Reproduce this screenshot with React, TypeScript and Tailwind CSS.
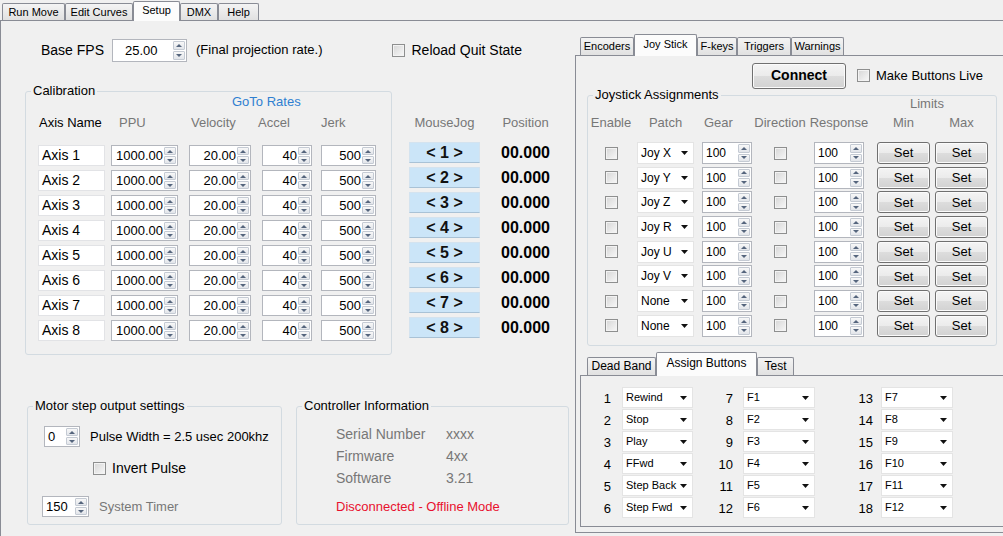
import React from 'react';

const GRAY = 'text-[#777777]';

function Tri({ up }: { up?: boolean }) {
  return (
    <svg width="6" height="3" viewBox="0 0 6 3" className="block">
      <path d={up ? 'M0 3L3 0L6 3Z' : 'M0 0L3 3L6 0Z'} fill="#55657d" />
    </svg>
  );
}

function SpinArrows() {
  return (
    <div className="flex w-[13px] shrink-0 flex-col gap-px py-px pr-px">
      <div className="flex flex-1 items-center justify-center rounded-[1px] border border-[#c4cad3] bg-gradient-to-b from-[#f8f8f8] to-[#e2e5ea]">
        <Tri up />
      </div>
      <div className="flex flex-1 items-center justify-center rounded-[1px] border border-[#c4cad3] bg-gradient-to-b from-[#f8f8f8] to-[#e2e5ea]">
        <Tri />
      </div>
    </div>
  );
}

function Spin({
  value,
  className = '',
  left,
  text = 'text-[13px]',
}: {
  value: string;
  className?: string;
  left?: boolean;
  text?: string;
}) {
  return (
    <div className={`flex shrink-0 border border-[#b3b6bd] bg-white ${className}`}>
      <div
        className={`flex flex-1 items-center leading-none ${text} ${
          left ? 'justify-start pl-[3px]' : 'justify-end pr-px'
        }`}
      >
        {value}
      </div>
      <SpinArrows />
    </div>
  );
}

function Check() {
  return (
    <span className="inline-block h-[13px] w-[13px] shrink-0 border border-[#8e8f8f] bg-gradient-to-br from-[#d6d6d6] to-[#f8f8f8] shadow-[inset_0_0_0_1px_#f3f3f3]" />
  );
}

function Combo({
  value,
  className = '',
  top,
}: {
  value: string;
  className?: string;
  top?: boolean;
}) {
  return (
    <div
      className={`flex shrink-0 justify-between border border-[#e4e4e4] bg-white pl-[3px] pr-[5px] ${
        top ? 'h-[21px] items-start pt-[2px] text-[11px]' : 'h-[22px] items-center text-[12px]'
      } ${className}`}
    >
      <span className="leading-[14px] whitespace-nowrap">{value}</span>
      <svg width="7" height="4" viewBox="0 0 7 4" className={top ? 'mt-[6px] block' : 'block'}>
        <path d="M0 0H7L3.5 4Z" fill="#111" />
      </svg>
    </div>
  );
}

function WinButton({
  label,
  className = '',
}: {
  label: string;
  className?: string;
}) {
  return (
    <div
      className={`flex shrink-0 items-center justify-center rounded-[3px] border border-[#707070] bg-[linear-gradient(#f4f4f4,#ebebeb_50%,#dddddd_50%,#d2d2d2)] shadow-[inset_0_0_0_1px_#fbfbfb] ${className}`}
    >
      {label}
    </div>
  );
}

function Tab({
  label,
  className,
  active,
}: {
  label: string;
  className: string;
  active?: boolean;
}) {
  return (
    <div
      className={`flex shrink-0 items-center justify-center rounded-t-[2px] border border-b-0 border-[#898c95] whitespace-nowrap ${
        active
          ? 'relative z-10 -mb-px bg-[#fcfcfc] pb-[3px]'
          : 'bg-gradient-to-b from-[#f4f4f4] to-[#e1e1e1]'
      } ${className}`}
    >
      {label}
    </div>
  );
}

function Group({
  title,
  className = '',
  children,
}: {
  title: string;
  className?: string;
  children: React.ReactNode;
}) {
  return (
    <fieldset className={`shrink-0 rounded-[3px] border border-[#d3dbe1] ${className}`}>
      <legend className="ml-[5px] px-[2px] text-[13px] leading-[10px]">{title}</legend>
      {children}
    </fieldset>
  );
}

const AXES = [1, 2, 3, 4, 5, 6, 7, 8];
const PATCHES = ['Joy X', 'Joy Y', 'Joy Z', 'Joy R', 'Joy U', 'Joy V', 'None', 'None'];
const ASSIGN = [
  ['Rewind', 'F1', 'F7'],
  ['Stop', 'F2', 'F8'],
  ['Play', 'F3', 'F9'],
  ['FFwd', 'F4', 'F10'],
  ['Step Back', 'F5', 'F11'],
  ['Step Fwd', 'F6', 'F12'],
];

function Calibration() {
  return (
    <Group title="Calibration" className="ml-[24px] w-[367px]">
      <div className="-mt-px h-[14px] pl-[206px] text-[13px] leading-[14px] text-[#2f7fd1]">
        GoTo Rates
      </div>
      <div className="mt-[7px] flex h-[14px] pl-[12px] text-[13px] leading-[14px]">
        <span className="w-[67px] pl-px">Axis Name</span>
        <span className={`ml-[6px] w-[67px] pl-[8px] ${GRAY}`}>PPU</span>
        <span className={`ml-[11px] w-[62px] pl-[2px] ${GRAY}`}>Velocity</span>
        <span className={`ml-[7px] w-[54px] ${GRAY}`}>Accel</span>
        <span className={`ml-[9px] w-[55px] ${GRAY}`}>Jerk</span>
      </div>
      <div className="mt-[15px] flex flex-col gap-[4px] pb-[13px]">
        {AXES.map((n) => (
          <div key={n} className="flex h-[21px] pl-[12px]">
            <div className="flex w-[67px] items-center border border-[#e2e3e6] bg-white pl-[3px] text-[14px]">
              Axis {n}
            </div>
            <Spin value="1000.00" className="ml-[6px] w-[67px]" />
            <Spin value="20.00" className="ml-[11px] w-[62px]" />
            <Spin value="40" className="ml-[11px] w-[50px]" />
            <Spin value="500" className="ml-[9px] w-[55px]" />
          </div>
        ))}
      </div>
    </Group>
  );
}

function JogColumn() {
  return (
    <div className="ml-[17px] pt-[30px]">
      <div className={`flex h-[14px] text-[13px] leading-[14px] ${GRAY}`}>
        <span className="w-[71px] text-center">MouseJog</span>
        <span className="ml-[21px] w-[49px] text-center whitespace-nowrap">Position</span>
      </div>
      <div className="mt-[12px] flex flex-col gap-[4px]">
        {AXES.map((n) => (
          <div key={n} className="flex h-[21px] items-center">
            <div className="flex h-[21px] w-[71px] items-center justify-center border border-[#d4e3ef] border-b-[#a9c2d6] bg-[#cbe5f8] text-[16px] font-bold text-[#111]">
              &lt; {n} &gt;
            </div>
            <div className="ml-[21px] w-[49px] text-center text-[16px] font-bold whitespace-nowrap">
              00.000
            </div>
          </div>
        ))}
      </div>
    </div>
  );
}

function BottomLeft() {
  return (
    <div className="mt-[46px] flex items-stretch">
      <Group title="Motor step output settings" className="ml-[26px] w-[255px]">
        <div className="mt-[15px] flex h-[21px] items-center pl-[16px]">
          <Spin value="0" left className="h-[21px] w-[36px]" />
          <span className="ml-[10px] text-[13px] whitespace-nowrap">Pulse Width = 2.5 usec 200khz</span>
        </div>
        <div className="mt-[13px] flex h-[16px] items-center pl-[65px]">
          <Check />
          <span className="ml-[6px] text-[14px]">Invert Pulse</span>
        </div>
        <div className="mt-[20px] flex h-[21px] items-center pl-[14px]">
          <Spin value="150" left className="h-[21px] w-[47px]" />
          <span className={`ml-[10px] text-[13px] ${GRAY}`}>System Timer</span>
        </div>
        <div className="h-[7px]" />
      </Group>
      <Group title="Controller Information" className="ml-[14px] w-[273px]">
        <div className="pl-[39px] text-[14px] leading-[16px]">
          <div className={`mt-[15px] grid grid-cols-[110px_auto] ${GRAY}`}>
            <span>Serial Number</span>
            <span>xxxx</span>
          </div>
          <div className={`mt-[6px] grid grid-cols-[110px_auto] ${GRAY}`}>
            <span>Firmware</span>
            <span>4xx</span>
          </div>
          <div className={`mt-[6px] grid grid-cols-[110px_auto] ${GRAY}`}>
            <span>Software</span>
            <span>3.21</span>
          </div>
          <div className="mt-[13px] text-[13px] text-[#e8102e]">Disconnected - Offline Mode</div>
        </div>
      </Group>
    </div>
  );
}

function JoystickPanel() {
  return (
    <Group title="Joystick Assignments" className="mt-[2px] ml-[11px] w-[410px]">
      <div className={`-mt-[3px] h-[14px] pl-[322px] text-[13px] leading-[14px] ${GRAY}`}>Limits</div>
      <div className={`mt-[5px] flex h-[14px] text-[13px] leading-[14px] whitespace-nowrap ${GRAY}`}>
        <span className="w-[46px] text-center">Enable</span>
        <span className="ml-[3px] w-[57px] text-center">Patch</span>
        <span className="ml-[8px] w-[50px] pl-[2px]">Gear</span>
        <span className="flex w-[56px] justify-center">Direction</span>
        <span className="ml-[6px] flex w-[50px] justify-center">Response</span>
        <span className="ml-[13px] w-[53px] text-center">Min</span>
        <span className="ml-[5px] w-[53px] text-center">Max</span>
      </div>
      <div className="mt-[12px] flex flex-col gap-[2.7px] pb-[8px]">
        {PATCHES.map((p, i) => (
          <div key={i} className="flex h-[22px] items-center">
            <div className="flex w-[46px] justify-center">
              <Check />
            </div>
            <Combo value={p} className="ml-[3px] w-[57px]" />
            <Spin value="100" left text="text-[12px]" className="ml-[8px] h-[22px] w-[50px]" />
            <div className="flex w-[56px] justify-center">
              <Check />
            </div>
            <Spin value="100" left text="text-[12px]" className="ml-[6px] h-[22px] w-[50px]" />
            <WinButton label="Set" className="ml-[13px] h-[22px] w-[53px] text-[13px]" />
            <WinButton label="Set" className="ml-[5px] h-[22px] w-[53px] text-[13px]" />
          </div>
        ))}
      </div>
    </Group>
  );
}

function AssignButtons() {
  return (
    <div className="flex flex-col gap-px pt-[11px]">
      {ASSIGN.map((row, i) => (
        <div key={i} className="flex h-[21px] items-center text-[13px]">
          <span className="w-[30px] pt-[3px] text-right">{i + 1}</span>
          <Combo top value={row[0]} className="ml-[11px] w-[71px]" />
          <span className="w-[40px] pt-[3px] text-right">{i + 7}</span>
          <Combo top value={row[1]} className="ml-[10px] w-[72px]" />
          <span className="w-[58px] pt-[3px] text-right">{i + 13}</span>
          <Combo top value={row[2]} className="ml-[8px] w-[72px]" />
        </div>
      ))}
    </div>
  );
}

function RightPane() {
  return (
    <div className="w-[428px] shrink-0 pt-[13px]">
      <div className="flex h-[21px] items-end pl-[5px] text-[11px]">
        <Tab label="Encoders" className="h-[18px] w-[54px]" />
        <Tab label="Joy Stick" active className="h-[22px] w-[63px]" />
        <Tab label="F-keys" className="h-[18px] w-[40px]" />
        <Tab label="Triggers" className="h-[18px] w-[54px]" />
        <Tab label="Warnings" className="h-[18px] w-[53px]" />
      </div>
      <div className="flex h-[478px] w-[440px] flex-col border border-[#898c95]">
        <div className="mt-[7px] flex h-[25px] items-center pl-[176px]">
          <WinButton label="Connect" className="h-[26px] w-[94px] text-[14px] font-bold" />
          <span className="ml-[11px] flex">
            <Check />
          </span>
          <span className="ml-[6px] text-[13px] whitespace-nowrap">Make Buttons Live</span>
        </div>
        <JoystickPanel />
        <div className="mt-[6px] ml-[4px] flex h-[23px] items-end pl-[7px] text-[12px]">
          <Tab label="Dead Band" className="h-[18px] w-[69px]" />
          <Tab label="Assign Buttons" active className="h-[24px] w-[101px]" />
          <Tab label="Test" className="h-[18px] w-[37px]" />
        </div>
        <div className="mb-[5px] ml-[4px] flex-1 border border-[#898c95]">
          <AssignButtons />
        </div>
      </div>
    </div>
  );
}

export default function App() {
  return (
    <div className="flex h-[536px] w-[1003px] flex-col overflow-hidden bg-[#f0f0f0] font-['Liberation_Sans',Arial,sans-serif] text-black">
      {/* main tabs */}
      <div className="flex h-[20px] shrink-0 items-end pl-[2px] text-[11px]">
        <Tab label="Run Move" className="h-[17px] w-[63px]" />
        <Tab label="Edit Curves" className="h-[17px] w-[68px]" />
        <Tab label="Setup" active className="h-[20px] w-[47px]" />
        <Tab label="DMX" className="h-[17px] w-[38px]" />
        <Tab label="Help" className="h-[17px] w-[41px]" />
      </div>

      <div className="flex flex-1 border-t border-l border-[#898c95]">
        {/* setup page */}
        <div className="w-[574px] shrink-0">
          <div className="mt-[18px] flex h-[22px] items-center pl-[40px]">
            <span className="text-[14px]">Base FPS</span>
            <Spin value="25.00" left className="ml-[8px] h-[23px] w-[75px] [&>div:first-child]:pl-[12px]" />
            <span className="ml-[9px] text-[13px] whitespace-nowrap">(Final projection rate.)</span>
            <span className="ml-[70px] flex">
              <Check />
            </span>
            <span className="ml-[6px] text-[14px] whitespace-nowrap">Reload Quit State</span>
          </div>

          <div className="mt-[25px] flex items-start">
            <Calibration />
            <JogColumn />
          </div>

          <BottomLeft />
        </div>

        <RightPane />
      </div>
    </div>
  );
}
